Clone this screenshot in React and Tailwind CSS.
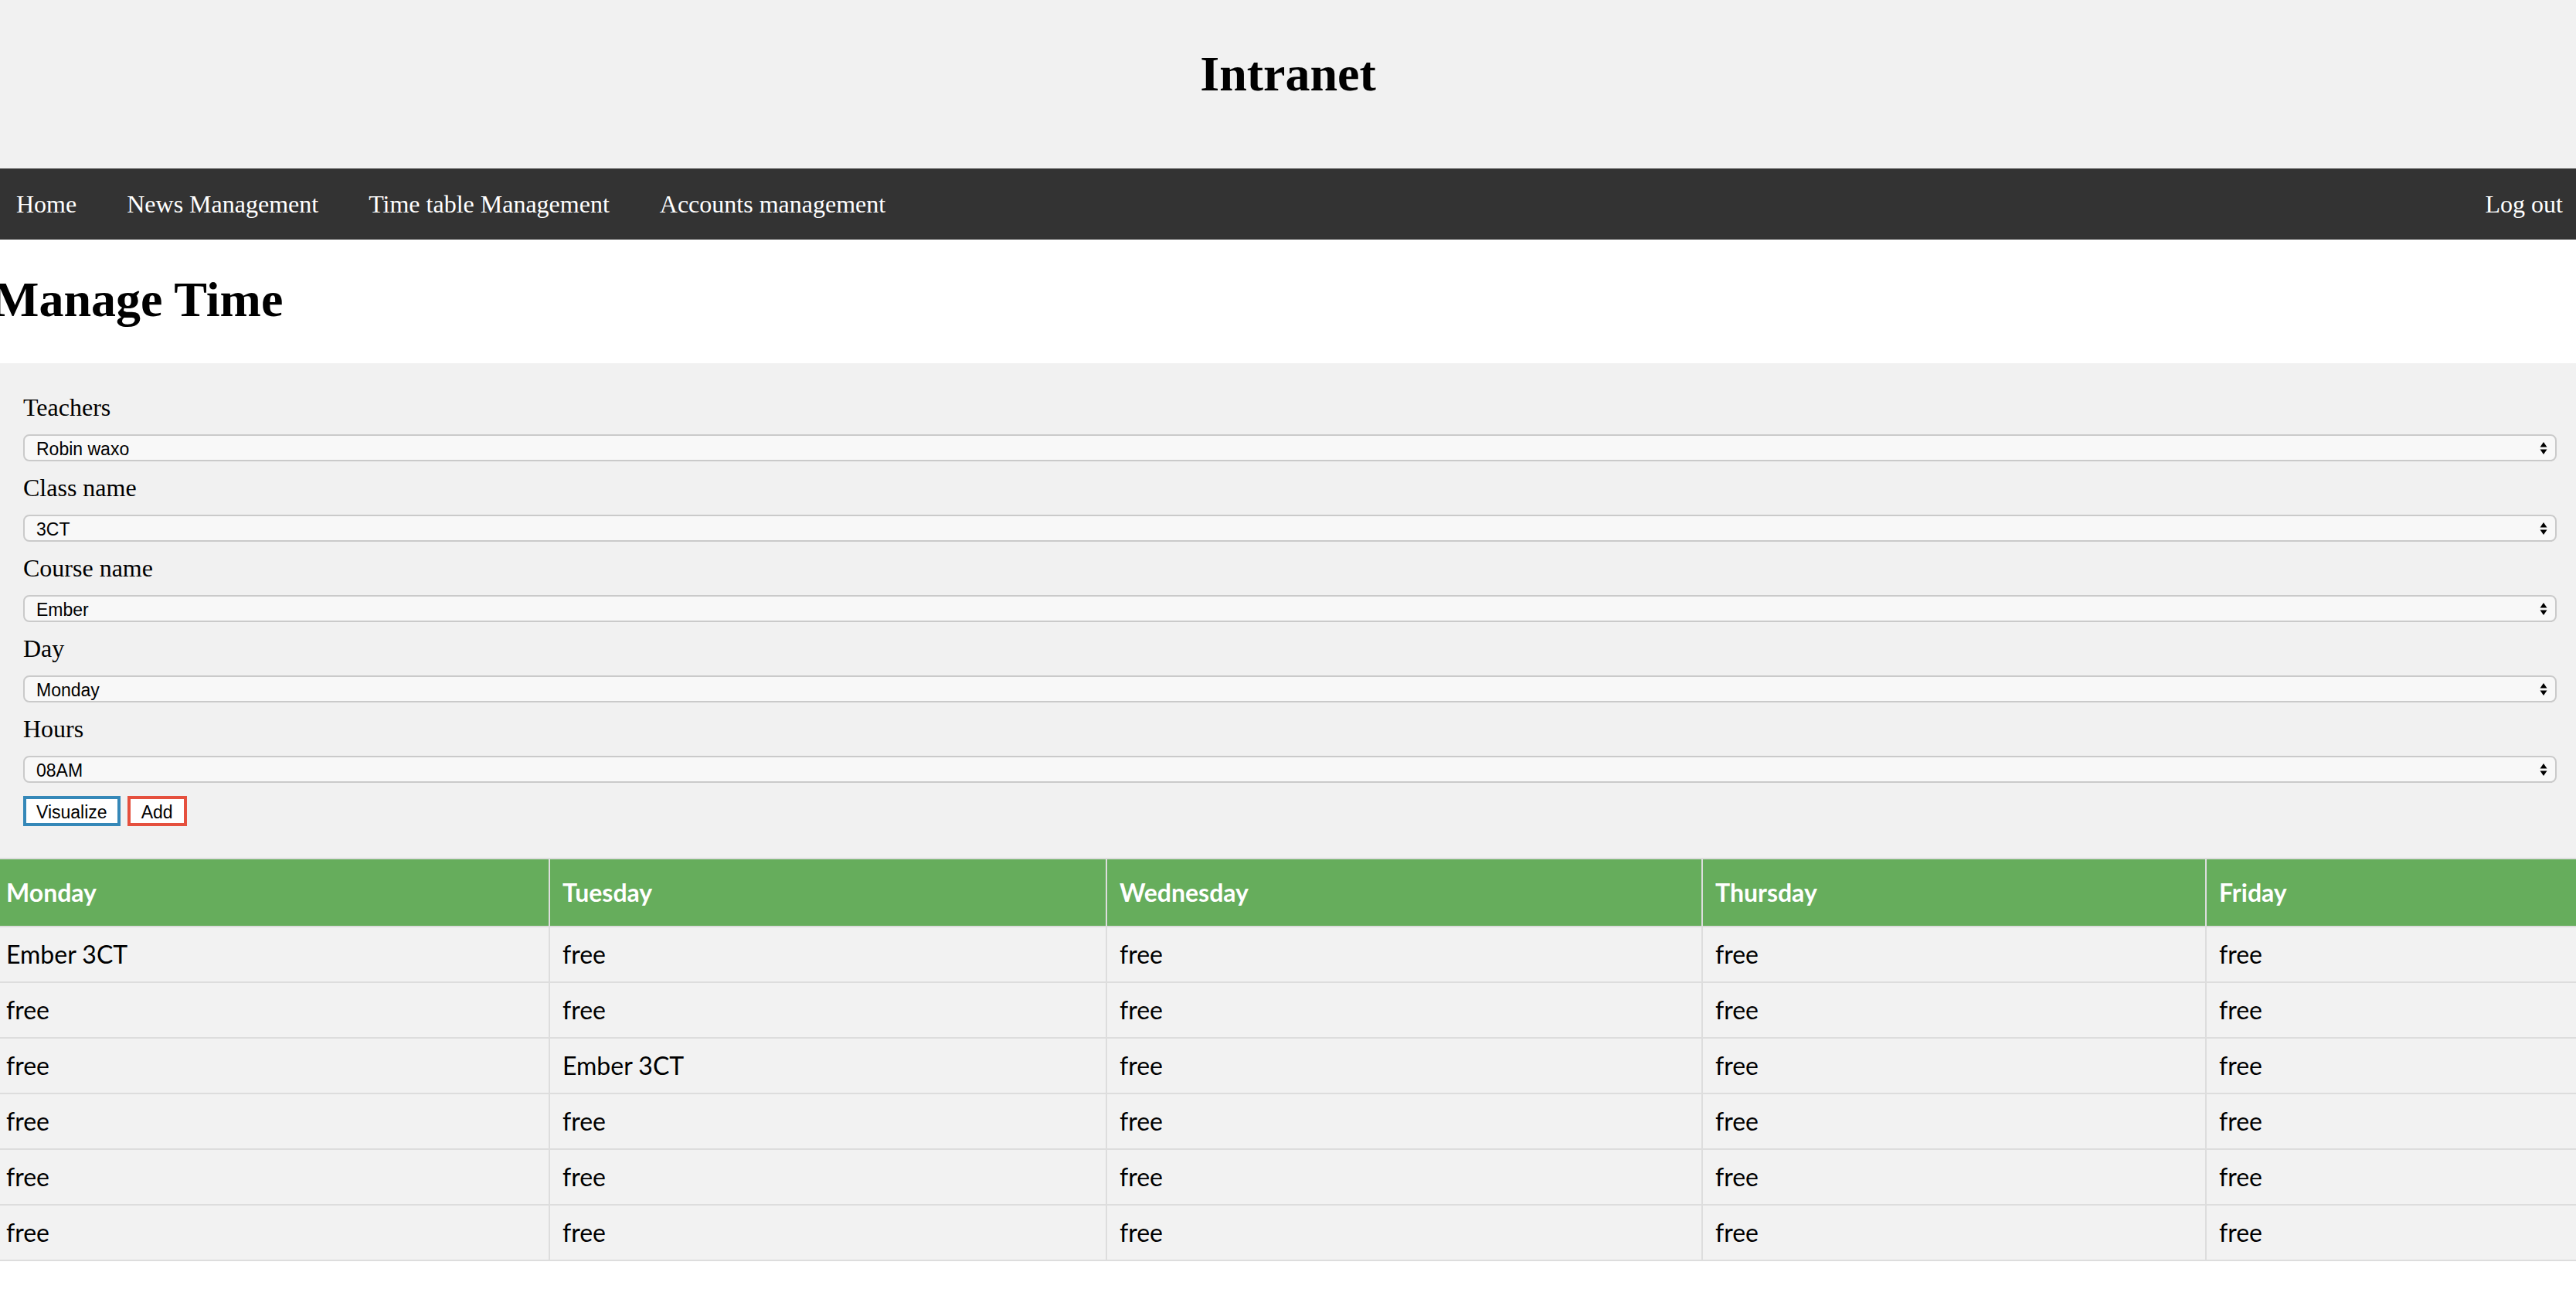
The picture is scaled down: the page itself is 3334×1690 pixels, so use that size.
import React from 'react';

const serif = { fontFamily: '"Liberation Serif", "Times New Roman", serif' };

const navLinks = ['Home', 'News Management', 'Time table Management', 'Accounts management'];

const fields = [
  { label: 'Teachers', value: 'Robin waxo' },
  { label: 'Class name', value: '3CT' },
  { label: 'Course name', value: 'Ember' },
  { label: 'Day', value: 'Monday' },
  { label: 'Hours', value: '08AM' },
];

const days = ['Monday', 'Tuesday', 'Wednesday', 'Thursday', 'Friday'];
const colWidths = ['w-[712px]', 'w-[721px]', 'w-[771px]', 'w-[652px]', 'w-auto'];

const slots = [
  ['Ember 3CT', 'free', 'free', 'free', 'free'],
  ['free', 'free', 'free', 'free', 'free'],
  ['free', 'Ember 3CT', 'free', 'free', 'free'],
  ['free', 'free', 'free', 'free', 'free'],
  ['free', 'free', 'free', 'free', 'free'],
  ['free', 'free', 'free', 'free', 'free'],
];

const SelectArrows = () => (
  <svg
    className="pointer-events-none absolute right-[12px] top-1/2 -translate-y-1/2"
    width="10"
    height="20"
    viewBox="0 0 10 20"
  >
    <path d="M5 2 L9.5 8.5 L0.5 8.5 Z" fill="#000" />
    <path d="M0.5 11.5 L9.5 11.5 L5 18 Z" fill="#000" />
  </svg>
);

const Field = ({ label, value }) => (
  <div className="mb-[16px]">
    <div className="mb-[17px] text-[32px] leading-[36px] text-black" style={serif}>
      {label}
    </div>
    <div className="relative">
      <select
        defaultValue={value}
        className="block h-[35px] w-full appearance-none rounded-[8px] border-2 border-[#cacaca] bg-[#f8f8f8] pl-[15px] text-[23px] text-black outline-none"
        style={{ fontFamily: '"Liberation Sans", Arial, sans-serif' }}
      >
        <option>{value}</option>
      </select>
      <SelectArrows />
    </div>
  </div>
);

export default function App() {
  return (
    <div className="min-h-[1690px] bg-white">
      <header className="bg-[#f1f1f1] pt-[59px] pb-[85px]">
        <h1 className="text-center text-[64px] font-bold leading-[74px] text-black" style={serif}>
          Intranet
        </h1>
      </header>

      <nav className="flex h-[92px] items-center justify-between bg-[#333333] pl-[21px] pr-[17px]" style={serif}>
        <ul className="flex gap-[65px] text-[32px] leading-[36px] text-white">
          {navLinks.map((link) => (
            <li key={link}>
              <a href="#">{link}</a>
            </li>
          ))}
        </ul>
        <a href="#" className="text-[32px] leading-[36px] text-white">
          Log out
        </a>
      </nav>

      <div className="overflow-hidden pt-[41px] pb-[45px]">
        <h2 className="-ml-[10px] text-[64px] font-bold leading-[74px] text-black" style={serif}>
          Manage Time
        </h2>
      </div>

      <form className="bg-[#f1f1f1] pt-[39px] pb-[41px] pl-[30px] pr-[25px]" onSubmit={(e) => e.preventDefault()}>
        {fields.map((field) => (
          <Field key={field.label} label={field.label} value={field.value} />
        ))}
        <div
          className="-mt-[16px] pt-[17px] flex gap-[9px] text-[23px] text-black"
          style={{ fontFamily: '"Liberation Sans", Arial, sans-serif' }}
        >
          <button type="button" className="h-[39px] border-4 border-[#3588b8] bg-white px-[13px]">
            Visualize
          </button>
          <button type="button" className="h-[39px] border-4 border-[#e5503e] bg-white px-[14px]">
            Add
          </button>
        </div>
      </form>

      <table
        className="w-full table-fixed border-separate border-spacing-0 border-t-2 border-[#dddddd] bg-[#f2f2f2]"
        style={{ fontFamily: 'Lato, "Open Sans", sans-serif' }}
      >
        <thead>
          <tr>
            {days.map((day, i) => (
              <th
                key={day}
                className={`${colWidths[i]} h-[88px] border-b-2 border-[#dddddd] bg-[#66ad5c] text-left align-middle text-[32px] font-bold text-white ${
                  i === 0 ? 'pl-[8px]' : 'pl-[16px]'
                } ${i < 4 ? 'border-r-2' : ''}`}
              >
                {day}
              </th>
            ))}
          </tr>
        </thead>
        <tbody>
          {slots.map((row, r) => (
            <tr key={r}>
              {row.map((cell, i) => (
                <td
                  key={i}
                  className={`h-[72px] border-b-2 border-[#dddddd] align-middle text-[32px] text-black ${
                    i === 0 ? 'pl-[8px]' : 'pl-[16px]'
                  } ${i < 4 ? 'border-r-2' : ''}`}
                >
                  {cell}
                </td>
              ))}
            </tr>
          ))}
        </tbody>
      </table>
    </div>
  );
}
